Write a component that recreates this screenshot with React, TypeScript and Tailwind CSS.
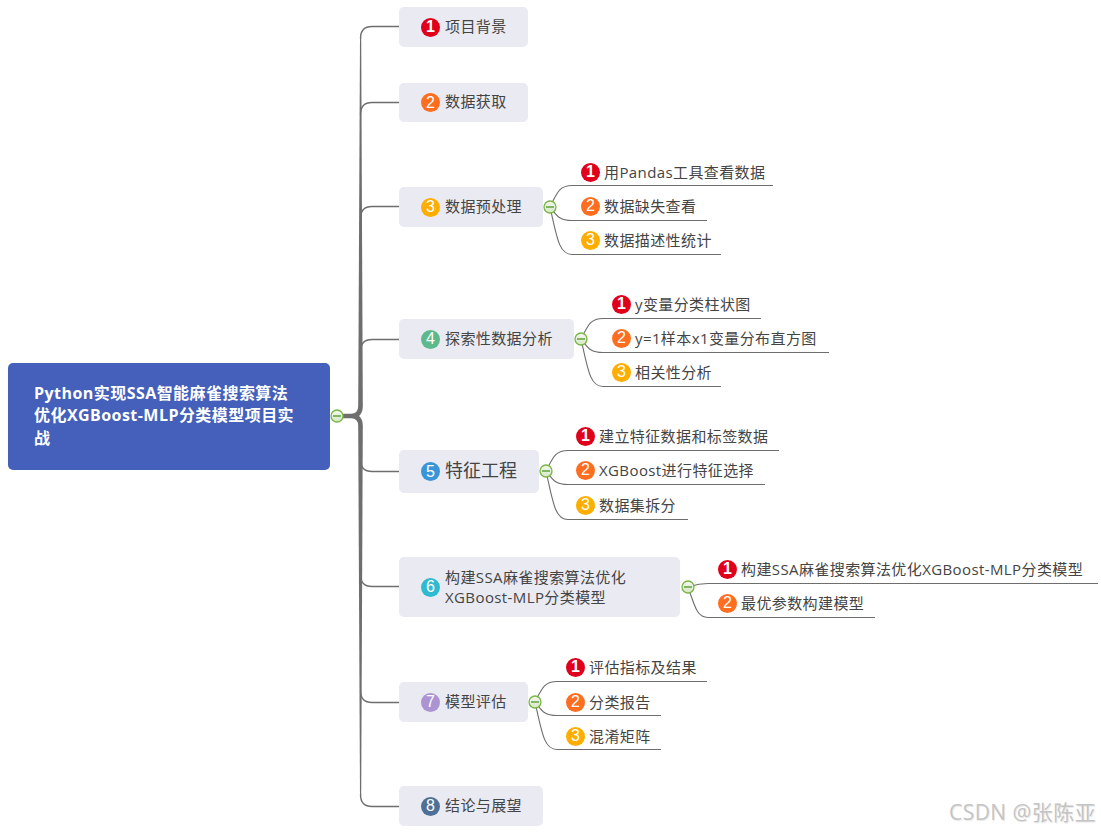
const FONT = "font-['Open_Sans','Noto_Sans_CJK_SC',sans-serif]";

const badgeColors = ["bg-[#e0001b]", "bg-[#ff6d1f]", "bg-[#ffae00]", "bg-[#5cb98c]", "bg-[#3a95d8]", "bg-[#2fbacf]", "bg-[#ac94d2]", "bg-[#4f7096]"];

type Topic = { n: number; cls: string; text: string[]; big?: boolean };
type Leaf = { n: number; cls: string; text: string };
type Branch = { x: number; y: number; toX: number; leaves: { y: number; end: number }[] };

const topics: Topic[] = [
  { n: 1, cls: "top-[7px] w-[129px] h-[40px]", text: ["项目背景"] },
  { n: 2, cls: "top-[83px] w-[129px] h-[39px]", text: ["数据获取"] },
  { n: 3, cls: "top-[187px] w-[144px] h-[40px]", text: ["数据预处理"] },
  { n: 4, cls: "top-[319px] w-[175px] h-[40px]", text: ["探索性数据分析"] },
  { n: 5, cls: "top-[450px] w-[140px] h-[43px]", text: ["特征工程"], big: true },
  { n: 6, cls: "top-[557px] w-[281px] h-[60px]", text: ["构建SSA麻雀搜索算法优化", "XGBoost-MLP分类模型"] },
  { n: 7, cls: "top-[682px] w-[129px] h-[40px]", text: ["模型评估"] },
  { n: 8, cls: "top-[786px] w-[144px] h-[40px]", text: ["结论与展望"] },
];

const leaves: Leaf[] = [
  { n: 1, cls: "left-[581px] top-[161px]", text: "用Pandas工具查看数据" },
  { n: 2, cls: "left-[581px] top-[195px]", text: "数据缺失查看" },
  { n: 3, cls: "left-[581px] top-[229px]", text: "数据描述性统计" },
  { n: 1, cls: "left-[612px] top-[293px]", text: "y变量分类柱状图" },
  { n: 2, cls: "left-[612px] top-[327px]", text: "y=1样本x1变量分布直方图" },
  { n: 3, cls: "left-[612px] top-[361px]", text: "相关性分析" },
  { n: 1, cls: "left-[576px] top-[425px]", text: "建立特征数据和标签数据" },
  { n: 2, cls: "left-[576px] top-[459px]", text: "XGBoost进行特征选择" },
  { n: 3, cls: "left-[576px] top-[494px]", text: "数据集拆分" },
  { n: 1, cls: "left-[718px] top-[558px]", text: "构建SSA麻雀搜索算法优化XGBoost-MLP分类模型" },
  { n: 2, cls: "left-[718px] top-[592px]", text: "最优参数构建模型" },
  { n: 1, cls: "left-[566px] top-[656px]", text: "评估指标及结果" },
  { n: 2, cls: "left-[566px] top-[691px]", text: "分类报告" },
  { n: 3, cls: "left-[566px] top-[725px]", text: "混淆矩阵" },
];

const branches: Branch[] = [
  { x: 550, y: 207, toX: 572, leaves: [{ y: 185.5, end: 773 }, { y: 220.5, end: 707 }, { y: 254.5, end: 721 }] },
  { x: 581, y: 339, toX: 603, leaves: [{ y: 318.5, end: 761 }, { y: 352.5, end: 829 }, { y: 386.5, end: 721 }] },
  { x: 546, y: 471, toX: 568, leaves: [{ y: 450.5, end: 779 }, { y: 484.5, end: 765 }, { y: 519.5, end: 688 }] },
  { x: 688, y: 587, toX: 708, leaves: [{ y: 583.5, end: 1098 }, { y: 617.5, end: 875 }] },
  { x: 535, y: 702, toX: 557, leaves: [{ y: 681.5, end: 707 }, { y: 715.5, end: 661 }, { y: 749.5, end: 661 }] },
];

const topicYs = [26.5, 102.5, 206.5, 339.5, 471.5, 586.5, 702.5, 806.5];

function Badge({ n }: { n: number }) {
  return (
    <span className={`flex h-[19px] w-[19px] shrink-0 items-center justify-center rounded-full font-['Liberation_Sans',sans-serif] text-[16px] leading-none tracking-normal text-white ${badgeColors[n - 1]} ${n === 1 ? "font-bold" : ""}`}>
      {n}
    </span>
  );
}

function Toggle({ x, y }: { x: number; y: number }) {
  return (
    <g>
      <circle cx={x} cy={y} r={6} fill="url(#toggle)" stroke="#78b643" strokeWidth={1.3} />
      <path d={`M${x - 4} ${y}H${x + 4}`} stroke="#3f8f1c" strokeWidth={1.2} />
    </g>
  );
}

function Connectors() {
  return (
    <svg className="absolute left-0 top-0" width={1101} height={832} fill="none">
      <defs>
        <linearGradient id="toggle" x1="0" y1="0" x2="0" y2="1">
          <stop offset="0" stopColor="#f6f9f1" />
          <stop offset="1" stopColor="#d6e7c6" />
        </linearGradient>
      </defs>
      {/* trunk, thicker toward the root */}
      <path d="M360 37 H361.2 L362.8 406 H358.2 Z" fill="#6e6e6e" />
      <path d="M358.2 426 H362.8 L361.2 796 H360 Z" fill="#6e6e6e" />
      <path d="M343 416 H351 Q360.5 416 360.5 406 M351 416 Q360.5 416 360.5 426" stroke="#6e6e6e" strokeWidth={4.6} />
      {topicYs.map((y, i) => (
        <path
          key={y}
          d={i < 4 ? `M360.5 ${y + 12} Q360.5 ${y} 372 ${y} H399` : `M360.5 ${y - 12} Q360.5 ${y} 372 ${y} H399`}
          stroke="#6e6e6e"
          strokeWidth={1.4}
        />
      ))}
      {branches.map((b) =>
        b.leaves.map((l) => (
          <path
            key={l.y}
            d={`M${b.x} ${b.y} C${b.x + 7} ${b.y + (l.y - b.y) * 0.65} ${b.x + 9} ${l.y} ${b.toX} ${l.y} H${l.end}`}
            stroke="#6e6e6e"
            strokeWidth={1.1}
          />
        ))
      )}
      <Toggle x={337} y={416} />
      {branches.map((b) => (
        <Toggle key={b.x} x={b.x} y={b.y} />
      ))}
    </svg>
  );
}

export default function App() {
  return (
    <div className={`relative h-[832px] w-[1101px] overflow-hidden bg-white ${FONT} text-[#444444]`}>
      <Connectors />

      <div className="absolute left-[8px] top-[363px] flex h-[107px] w-[322px] items-center rounded-[5px] bg-[#4460bb] pb-[2px] pl-[26px] text-[16px] font-bold leading-[22.5px] tracking-[0.45px] text-white">
        <div className="whitespace-nowrap">
          Python实现SSA智能麻雀搜索算法
          <br />
          优化XGBoost-MLP分类模型项目实
          <br />
          战
        </div>
      </div>

      {topics.map((t) => (
        <div key={t.n} className={`absolute left-[399px] flex items-center gap-[5px] rounded-[5px] bg-[#e9eaf2] pl-[22px] ${t.cls}`}>
          <Badge n={t.n} />
          <div className={`whitespace-nowrap ${t.text.length > 1 ? "leading-[20px]" : "pb-[2px] leading-[23px]"} ${t.big ? "text-[18px]" : "text-[15px] tracking-[0.4px]"}`}>
            {t.text.map((line) => (
              <div key={line}>{line}</div>
            ))}
          </div>
        </div>
      ))}

      {leaves.map((l) => (
        <div key={l.text} className={`absolute flex h-[22px] items-center gap-[4px] whitespace-nowrap text-[15px] tracking-[0.4px] ${l.cls}`}>
          <Badge n={l.n} />
          <span>{l.text}</span>
        </div>
      ))}

      <div className="absolute left-[949px] top-[798px] whitespace-nowrap text-[21px] leading-[28px] tracking-[0.45px] text-[#c4c4c4] [text-shadow:1px_1px_1px_#e8e8e8]">CSDN @张陈亚</div>
    </div>
  );
}
